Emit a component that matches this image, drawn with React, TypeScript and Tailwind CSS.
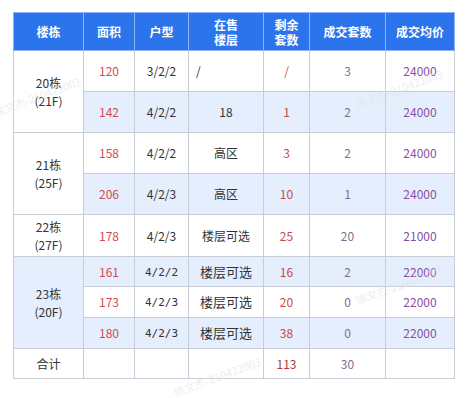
import React from "react";

type Row = {
  area: string;
  type: string;
  floor: string;
  floorLeft?: boolean;
  remain: string;
  sold: string;
  price: string;
  blue: boolean;
  h: string;
  special?: boolean;
};

type Group = { name: string; sub: string; blue: boolean; rows: Row[] };

const groups: Group[] = [
  {
    name: "20栋",
    sub: "(21F)",
    blue: false,
    rows: [
      { area: "120", type: "3/2/2", floor: "/", floorLeft: true, remain: "/", sold: "3", price: "24000", blue: false, h: "h-[41px]" },
      { area: "142", type: "4/2/2", floor: "18", remain: "1", sold: "2", price: "24000", blue: true, h: "h-[41px]" },
    ],
  },
  {
    name: "21栋",
    sub: "(25F)",
    blue: false,
    rows: [
      { area: "158", type: "4/2/2", floor: "高区", remain: "3", sold: "2", price: "24000", blue: false, h: "h-[41px]" },
      { area: "206", type: "4/2/3", floor: "高区", remain: "10", sold: "1", price: "24000", blue: true, h: "h-[41px]" },
    ],
  },
  {
    name: "22栋",
    sub: "(27F)",
    blue: false,
    rows: [
      { area: "178", type: "4/2/3", floor: "楼层可选", remain: "25", sold: "20", price: "21000", blue: false, h: "h-[42px]" },
    ],
  },
  {
    name: "23栋",
    sub: "(20F)",
    blue: true,
    rows: [
      { area: "161", type: "4/2/2", floor: "楼层可选", remain: "16", sold: "2", price: "22000", blue: true, h: "h-[30px]", special: true },
      { area: "173", type: "4/2/3", floor: "楼层可选", remain: "20", sold: "0", price: "22000", blue: false, h: "h-[31px]", special: true },
      { area: "180", type: "4/2/3", floor: "楼层可选", remain: "38", sold: "0", price: "22000", blue: true, h: "h-[31px]", special: true },
    ],
  },
];

const td = "border border-[#c9cdd6] p-0 align-middle text-center";
const th = "border border-[#8db3f2] p-0 align-middle text-center text-white font-bold text-[12px] leading-[15px]";

const marks = [
  { left: -6, top: 104 },
  { left: 356, top: 96 },
  { left: 356, top: 292 },
  { left: 174, top: 384 },
];

export default function App() {
  return (
    <div className="relative w-[466px] h-[398px] bg-white overflow-hidden" style={{ fontFamily: '"Noto Sans CJK SC", "Noto Sans", sans-serif' }}>
      <div className="pt-[12px] pl-[13px]">
        <table className="border-collapse table-fixed w-[441px] text-[12px] text-[#333]">
          <colgroup>
            <col className="w-[70px]" />
            <col className="w-[51px]" />
            <col className="w-[54px]" />
            <col className="w-[75px]" />
            <col className="w-[46px]" />
            <col className="w-[76px]" />
            <col className="w-[69px]" />
          </colgroup>
          <thead>
            <tr className="h-[38px] bg-[#2c74ec]">
              <th className={th}>楼栋</th>
              <th className={th}>面积</th>
              <th className={th}>户型</th>
              <th className={th}>在售<br />楼层</th>
              <th className={th}>剩余<br />套数</th>
              <th className={th}>成交套数</th>
              <th className={th}>成交均价</th>
            </tr>
          </thead>
          <tbody>
            {groups.map((g) =>
              g.rows.map((r, i) => (
                <tr key={g.name + i} className={`${r.h} ${r.blue ? "bg-[#e5eefd]" : "bg-white"}`}>
                  {i === 0 && (
                    <td rowSpan={g.rows.length} className={`${td} leading-[18px] text-[#333] ${g.blue ? "bg-[#e5eefd]" : "bg-white"}`}>
                      {g.name}
                      <br />
                      {g.sub}
                    </td>
                  )}
                  <td className={`${td} text-[#d24a55]`}>{r.area}</td>
                  <td className={`${td} text-[#333]`}>
                    {r.special ? (
                      <span className="text-[11px]" style={{ fontFamily: '"DejaVu Sans Mono", monospace' }}>{r.type}</span>
                    ) : (
                      r.type
                    )}
                  </td>
                  <td className={`${td} text-[#333] ${r.floorLeft ? "text-left pl-[7px]" : ""} ${r.special ? "text-[13px]" : ""}`}>{r.floor}</td>
                  <td className={`${td} text-[#c64a4a]`}>{r.remain}</td>
                  <td className={`${td} text-[#7e6f8e]`}>{r.sold}</td>
                  <td className={`${td} text-[#8a4fa6]`}>{r.price}</td>
                </tr>
              ))
            )}
            <tr className="h-[30px] bg-white">
              <td className={`${td} text-[#333]`}>合计</td>
              <td className={td}></td>
              <td className={td}></td>
              <td className={td}></td>
              <td className={`${td} text-[#b03a3a]`}>113</td>
              <td className={`${td} text-[#7e6f8e]`}>30</td>
              <td className={td}></td>
            </tr>
          </tbody>
        </table>
      </div>
      {marks.map((m, i) => (
        <div
          key={i}
          className="absolute pointer-events-none text-[11px] text-[#e4e4e4] opacity-60 whitespace-nowrap -rotate-[20deg] origin-left"
          style={{ left: m.left, top: m.top }}
        >
          徐文杰-210422003
        </div>
      ))}
    </div>
  );
}
